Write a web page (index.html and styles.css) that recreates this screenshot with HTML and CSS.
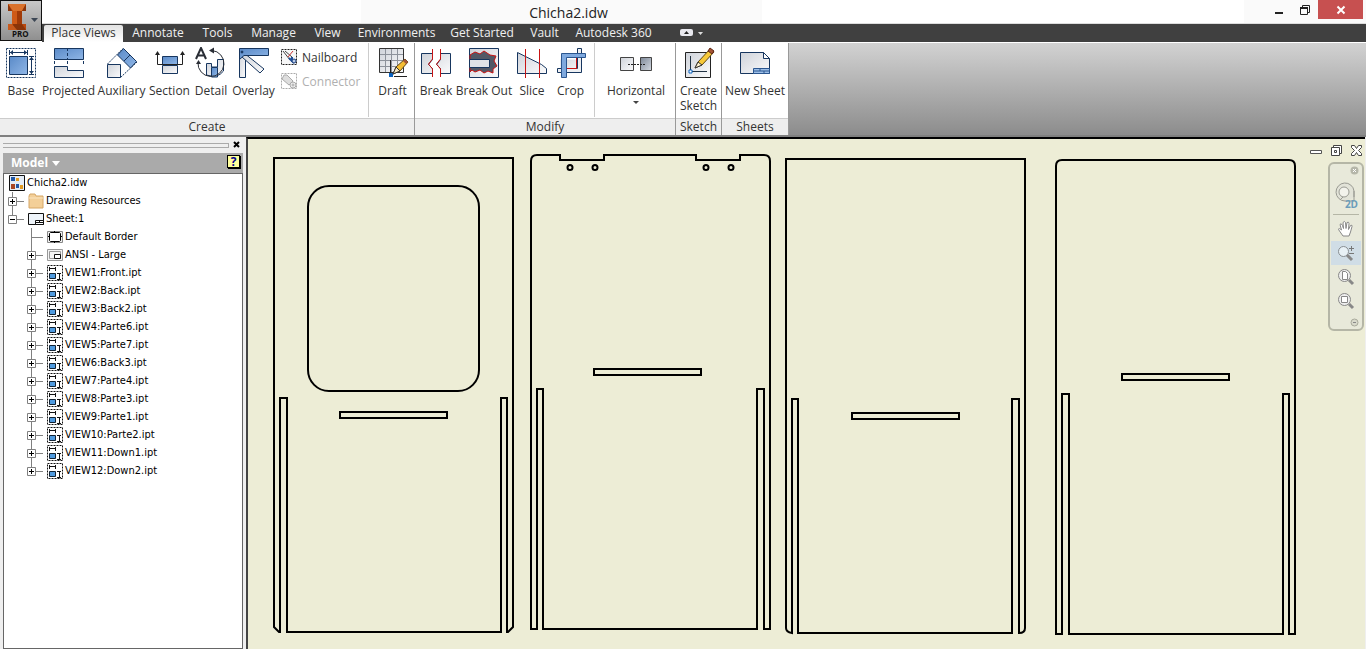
FILE: index.html
```
<!DOCTYPE html>

<html lang="en">
	<head>
		<title>Chicha2.idw</title>
		<meta charset="utf-8" />
		<link rel="stylesheet" href="styles.css">
	</head>
	<body>
		<!-- shared gradients and tree icons -->
		<svg class="defs" width="0" height="0" aria-hidden="true">
			<defs>
				<linearGradient id="blue" x1="0" y1="0" x2="1" y2="1"><stop offset="0" stop-color="#5a8ac8"/><stop offset="1" stop-color="#8fb6e6"/></linearGradient>
				<linearGradient id="silver" x1="0" y1="0" x2="1" y2="1"><stop offset="0" stop-color="#cfd3da"/><stop offset="1" stop-color="#fbfbfc"/></linearGradient>
				<linearGradient id="steel" x1="0" y1="0" x2="1" y2="1"><stop offset="0" stop-color="#7c8797"/><stop offset="1" stop-color="#d5dae2"/></linearGradient>
				<symbol id="twig-plus" viewBox="0 0 20 18"><path d="M4.500 0v18M9 9.500h7" stroke="#808080"/><path d="M.5 5.500h8v8h-8z" fill="#fff" stroke="#808080"/><path d="M2 9.500h5M4.500 7v5" stroke="#000"/></symbol>
				<symbol id="twig-last" viewBox="0 0 20 18"><path d="M4.500 0v9M9 9.500h7" stroke="#808080"/><path d="M.5 5.500h8v8h-8z" fill="#fff" stroke="#808080"/><path d="M2 9.500h5M4.500 7v5" stroke="#000"/></symbol>
				<symbol id="twig-minus" viewBox="0 0 20 18"><path d="M4.500 0v9M9 9.500h7" stroke="#808080"/><path d="M.5 5.500h8v8h-8z" fill="#fff" stroke="#808080"/><path d="M2 9.500h5" stroke="#000"/></symbol>
				<symbol id="twig-leaf" viewBox="0 0 20 18"><path d="M4.500 0v18M5 9.500h11" stroke="#808080"/></symbol>
				<symbol id="view" viewBox="0 0 16 16"><path d="M.5.5h15v15H.5z" fill="#fff" stroke="#111" stroke-dasharray="2 1"/><path d="M2.500 2v4M8.500 2v4M3 3.500h5M10 8.500h4M10 14.500h4M12.500 9v5" stroke="#111" fill="none"/><path d="M2.500 8.500h6v5h-6z" fill="#4f9be0" stroke="#123"/></symbol>
			</defs>
		</svg>

		<header class="top">
			<button class="app" aria-label="Application menu">
				<svg width="40" height="40" viewBox="0 0 40 40">
					<path d="M7 3h18v7h-4v13h4v6H7v-6h4V10H7z" fill="#b9480f"/>
					<path d="M7 3h18l-4 7h-9z" fill="#d9722c"/><path d="M7 3l4 7H7zM25 3v7h-4z" fill="#8a3409"/>
					<path d="M11 10h5v13h-5z" fill="#cf5a17"/><path d="M16 10h5v13h-5z" fill="#a03a08"/>
					<path d="M8 29l4-6h9l4 6z" fill="#8a3409"/><path d="M7 23h4l5 6H7z" fill="#c85a1c"/>
					<path d="M30 17h7l-3.500 4z" fill="#3c4654"/>
				</svg>
				<span>PRO</span>
			</button>
			<div class="titlebar">
				<h1>Chicha2.idw</h1>
				<div class="window-buttons">
					<button aria-label="Minimize"><svg width="12" height="12"><path d="M2 8h8v2H2z" fill="#222"/></svg></button>
					<button aria-label="Restore"><svg width="12" height="12"><path d="M1.500 3.500h7v7h-7zM3.500 3V1.500h7v7H9" fill="none" stroke="#222"/><path d="M1 3h8v2H1z" fill="#222"/></svg></button>
					<button class="close" aria-label="Close"><svg width="10" height="10"><path d="M1.500 1.500l7 7M8.500 1.500l-7 7" stroke="#fff" stroke-width="2"/></svg></button>
				</div>
			</div>
			<nav class="tabs">
				<a href="#" class="active">Place Views</a>
				<a href="#">Annotate</a>
				<a href="#">Tools</a>
				<a href="#">Manage</a>
				<a href="#">View</a>
				<a href="#">Environments</a>
				<a href="#">Get Started</a>
				<a href="#">Vault</a>
				<a href="#">Autodesk 360</a>
				<button aria-label="Minimize ribbon"><svg width="24" height="8"><rect width="13" height="7" rx="2" fill="#e8e8ee"/><path d="M4 5h5L6.500 2z" fill="#222"/><path d="M18 3h5l-2.500 3z" fill="#ddd"/></svg></button>
			</nav>
		</header>

		<div class="ribbon">
			<section class="panel create">
				<div class="tools">
					<button class="tool"><svg width="32" height="32" fill="none" stroke="#17365f"><path d="M1.500 1.500h29v29h-29z" stroke-dasharray="2 1"/><path d="M4.500 9.500h18v18h-18z" fill="url(#blue)" stroke-width="1"/><path d="M4.500 3v5M22.500 3v5M5 5.500h17M24 9.500h5M24 27.500h5M26.500 10v17" /><path d="M8 3v5L5 5.500zM19 3v5l3-2.500zM24 13h5l-2.500-3zM24 24h5l-2.500 3z" fill="#17365f" stroke="none"/></svg>Base</button>
					<button class="tool"><svg width="32" height="32" stroke="#17365f"><path d="M1.500 1.500h29v11h-29z" fill="url(#blue)"/><path d="M14.500 1v12M1.500 14v4M30.500 14v4M14.500 14v4" stroke-dasharray="3 2"/><path d="M1.500 19.500h13v4h16v7h-29z" fill="url(#silver)"/></svg>Projected</button>
					<button class="tool"><svg width="32" height="32" stroke="#17365f"><path d="M1.500 17L17 1.500M14.500 30.500L31 15" stroke-dasharray="2 1"/><path d="M1.500 17.500h13v13h-13z" fill="url(#silver)"/><path d="M17.500 1.500l13 13-6 6.500-13-13z" fill="url(#blue)"/><path d="M18 14l6-6"/></svg>Auxiliary</button>
					<button class="tool"><svg width="32" height="32" stroke="#17365f"><path d="M8.500 18.500h15v8h-15z" fill="url(#silver)"/><path d="M8.500 9.500h15v8h-15z" fill="url(#blue)"/><path d="M3.500 5v12.500h25V5" fill="none" stroke="#222"/><path d="M1 8l2.500-4L6 8zM26 8l2.500-4L31 8z" fill="#222" stroke="none"/></svg>Section</button>
					<button class="tool"><svg width="32" height="32" fill="none" stroke="#17365f"><path d="M11.500 28V16.500h5V20h6v-7.500h6V24q-6 8-17 4z" fill="url(#silver)"/><path d="M16.500 20.500h6V30h-6z" fill="url(#blue)"/><path d="M17 3.500a13 13 0 1 1-14 12" stroke="#2a2e36"/><path d="M14 3.500l5-3v6zM1 17l2.500-4L6 17z" fill="#2a2e36" stroke="none"/><path d="M1 12L6 1l5 11M3 8.500h6" stroke="#2a2e36" stroke-width="2"/></svg>Detail</button>
					<button class="tool"><svg width="32" height="32" stroke="#17365f"><path d="M1.500 4h6v26.500h-6z" fill="url(#silver)"/><path d="M6 6l20 16-4 4L4 10z" fill="url(#silver)"/><path d="M1.500 1.500h29v7H6l-4.500 4z" fill="url(#blue)"/><circle cx="4" cy="5" r="1" fill="#17365f"/></svg>Overlay</button>
					<div class="small-tools">
						<button class="small"><svg width="16" height="16"><path d="M.5.5h15v15H.5z" fill="#f7f7f7" stroke="#222" stroke-dasharray="2 1"/><path d="M2 2l7 9M4 2l7 6" stroke="#444"/><path d="M7 8l5-6" stroke="#c33"/><path d="M8 9l5 5M11 8v5" stroke="#1d4f9c" stroke-width="2"/><circle cx="13" cy="12" r="2" fill="#b9cbe8" stroke="#1d3f7c"/></svg>Nailboard</button>
						<button class="small" disabled><svg width="16" height="16" fill="none" stroke="#aaa"><path d="M.5.5h15v15H.5z" stroke-dasharray="2 1"/><path d="M3 2l-2 4 7 6 4-4-6-6z" fill="#ddd"/><circle cx="12" cy="12" r="3" fill="#eee"/><circle cx="12" cy="12" r="1"/></svg>Connector</button>
					</div>
					<button class="tool draft"><svg width="32" height="32"><path d="M2.500 1.500h24v24h-24z" fill="url(#silver)" stroke="#333"/><path d="M8.500 2v23M14.500 2v23M20.500 2v23M3 7.500h23M3 13.500h23M3 19.500h23" stroke="#8d929b"/><path d="M13.500 13v13" stroke="#222"/><path d="M12 26h4v4h-4z" fill="#0b62c0"/><path d="M17 29.500h13" stroke="#222"/><path d="M16 27l3-7 9-8 3 3-8 9z" fill="#f5bd33" stroke="#5f4716"/><path d="M16 27l3-7 4 4z" fill="#f7e7c0" stroke="#333"/><path d="M26 14l2-2 3 3-2 2z" fill="#a55436"/></svg>Draft</button>
				</div>
				<h2>Create</h2>
			</section>
			<section class="panel modify">
				<div class="tools">
					<button class="tool"><svg width="32" height="32" fill="none"><path d="M12.500 6.500h-11v20h11v-5l-4-4 4-5zM20.500 6.500h10v20h-10v-5l-4-4 4-5z" fill="url(#silver)" stroke="#17365f"/><path d="M12.500 2v10l-4 5 4 5v8M20.500 2v10l-4 5 4 5v8" fill="none" stroke="#c81414"/></svg>Break</button>
					<button class="tool"><svg width="32" height="32"><path d="M1.500 1.500h29v29h-29z" fill="url(#silver)" stroke="#17365f"/><path d="M2 8l5-3 5 2 4-3 6 4 6 1-2 5 3 5-4 3v4l-5-2-4 2-4-3-5 2-3-2-2 2z" fill="#525866" stroke="#c81414"/><path d="M1.500 12.500h20v8h-20z" fill="#dfe2e7" stroke="#17365f"/></svg>Break Out</button>
					<button class="tool"><svg width="32" height="32"><path d="M1.500 5.500l24 12 5 4v5h-29z" fill="url(#silver)" stroke="#17365f"/><path d="M9.500 2v29M23.500 2v29" stroke="#c81414"/></svg>Slice</button>
					<button class="tool crop"><svg width="32" height="32" fill="none" stroke="#17365f"><path d="M5.500 12.500h17v13h-17z" fill="url(#silver)" stroke="none"/><path d="M22.500 1.500h4v24h-24v-4h20z" fill="#eef0f3"/><path d="M21.500 11v10.500h-10" stroke="#c81414"/><path d="M6.500 6.500h24v4h-19v20h-5z" fill="#7fa9de" stroke="#2b568f"/></svg>Crop</button>
					<button class="tool horizontal"><svg width="32" height="32"><path d="M.5 10.500h13v13H.5z" fill="url(#silver)" stroke="#444"/><path d="M20.500 10.500h11v13h-11z" fill="url(#steel)" stroke="#444"/><path d="M8 17.500h18" stroke="#222" stroke-dasharray="2 1"/></svg>Horizontal<i class="caret"></i></button>
				</div>
				<h2>Modify</h2>
			</section>
			<section class="panel sketch">
				<div class="tools">
					<button class="tool"><svg width="32" height="32"><path d="M2.500 5.500h25v25h-25z" fill="url(#silver)" stroke="#222"/><path d="M7.500 9v14M9 24.500h15" stroke="#234"/><path d="M6 23h3v3H6z" fill="#fff" stroke="#0b62c0"/><path d="M12 21l3-6L27 2l4 3-12 13z" fill="#f7c93a" stroke="#5f4716"/><path d="M12 21l3-6 4 3z" fill="#fff2cf" stroke="#333"/><path d="M25 4l2-3 4 3-2 3z" fill="#a55436" stroke="#5f2716"/></svg>Create<br>Sketch</button>
				</div>
				<h2>Sketch</h2>
			</section>
			<section class="panel sheets">
				<div class="tools">
					<button class="tool"><svg width="32" height="32"><path d="M1.500 5.500h23l6 6v15h-29z" fill="url(#silver)" stroke="#17365f"/><path d="M24.500 5.500v6h6z" fill="#fff" stroke="#17365f"/><path d="M14.500 21.500h16v5h-16zM14 24h16M21 22v2M25 24v3" fill="#9dbfe8" stroke="#2b568f"/></svg>New Sheet</button>
				</div>
				<h2>Sheets</h2>
			</section>
		</div>

		<div class="workspace">
			<aside class="browser">
				<div class="grip"><span></span><button aria-label="Close browser"><svg width="8" height="8"><path d="M1 1l5 5M6 1L1 6" stroke="#000" stroke-width="2"/></svg></button></div>
				<div class="browser-head">
					<button>Model <svg width="8" height="5"><path d="M0 0h8L4 5z" fill="#fff"/></svg></button>
					<button class="help" aria-label="Help">?</button>
				</div>
				<ul class="tree">
					<li>
						<div class="row root"><svg width="16" height="16"><path d="M.5.5h15v15H.5z" fill="#e4edf7" stroke="#111"/><path d="M2 2h4v4H2zM7 9h3v4H7z" fill="#2358a5"/><path d="M7 3h3v3H7zM11 10h3v4h-3z" fill="#e19a22"/><path d="M2 9h4v5H2z" fill="#a84624"/></svg>Chicha2.idw</div>
						<ul>
							<li><div class="row"><svg class="twig"><use href="#twig-plus"/></svg><svg width="16" height="16"><path d="M1 3l1-2h5l1 2h7v12H1z" fill="#f3cf98" stroke="#d6a766"/><path d="M1 5h14" stroke="#fbe5c0"/></svg>Drawing Resources</div></li>
							<li>
								<div class="row"><svg class="twig"><use href="#twig-minus"/></svg><svg width="16" height="16"><path d="M.5 2.500h15v11H.5z" fill="#eef4fa" stroke="#111"/><path d="M7.500 9.500h8v4h-8zM8 11.500h7M11.500 10v2" fill="#fff" stroke="#111"/></svg>Sheet:1</div>
								<ul>
									<li><div class="row"><svg class="twig"><use href="#twig-leaf"/></svg><svg width="16" height="16"><path d="M.5 2.500h15v11H.5z" fill="#eee" stroke="#888"/><path d="M2.500 4.500l1-1h9l1 1v7l-1 1h-9l-1-1z" fill="#fff" stroke="#000"/><path d="M1 7.500h1M14 7.500h1M7.500 2v1M7.500 13v1" stroke="#000"/></svg>Default Border</div></li>
									<li><div class="row"><svg class="twig"><use href="#twig-plus"/></svg><svg width="16" height="16"><path d="M.5 2.500h15v11H.5zM2.500 4.500h11v7h-11z" fill="#f4f4f4" stroke="#999"/><path d="M7.500 7.500h6v4h-6z" fill="#fff" stroke="#111"/></svg>ANSI - Large</div></li>
									<li><div class="row"><svg class="twig"><use href="#twig-plus"/></svg><svg width="16" height="16"><use href="#view"/></svg>VIEW1:Front.ipt</div></li>
									<li><div class="row"><svg class="twig"><use href="#twig-plus"/></svg><svg width="16" height="16"><use href="#view"/></svg>VIEW2:Back.ipt</div></li>
									<li><div class="row"><svg class="twig"><use href="#twig-plus"/></svg><svg width="16" height="16"><use href="#view"/></svg>VIEW3:Back2.ipt</div></li>
									<li><div class="row"><svg class="twig"><use href="#twig-plus"/></svg><svg width="16" height="16"><use href="#view"/></svg>VIEW4:Parte6.ipt</div></li>
									<li><div class="row"><svg class="twig"><use href="#twig-plus"/></svg><svg width="16" height="16"><use href="#view"/></svg>VIEW5:Parte7.ipt</div></li>
									<li><div class="row"><svg class="twig"><use href="#twig-plus"/></svg><svg width="16" height="16"><use href="#view"/></svg>VIEW6:Back3.ipt</div></li>
									<li><div class="row"><svg class="twig"><use href="#twig-plus"/></svg><svg width="16" height="16"><use href="#view"/></svg>VIEW7:Parte4.ipt</div></li>
									<li><div class="row"><svg class="twig"><use href="#twig-plus"/></svg><svg width="16" height="16"><use href="#view"/></svg>VIEW8:Parte3.ipt</div></li>
									<li><div class="row"><svg class="twig"><use href="#twig-plus"/></svg><svg width="16" height="16"><use href="#view"/></svg>VIEW9:Parte1.ipt</div></li>
									<li><div class="row"><svg class="twig"><use href="#twig-plus"/></svg><svg width="16" height="16"><use href="#view"/></svg>VIEW10:Parte2.ipt</div></li>
									<li><div class="row"><svg class="twig"><use href="#twig-plus"/></svg><svg width="16" height="16"><use href="#view"/></svg>VIEW11:Down1.ipt</div></li>
									<li><div class="row"><svg class="twig"><use href="#twig-last"/></svg><svg width="16" height="16"><use href="#view"/></svg>VIEW12:Down2.ipt</div></li>
								</ul>
							</li>
						</ul>
					</li>
				</ul>
			</aside>

			<main class="canvas">
				<svg class="drawing" width="1100" height="508" viewBox="248 139 1100 508" fill="none" stroke="#000" stroke-width="2">
					<!-- front -->
					<path d="M280 632h-1l-5-5V158h239v469l-5 5h-1V398h-6v234H287V398h-7z"/>
					<rect x="308" y="186" width="171" height="205" rx="21"/>
					<path d="M340 412h107v6H340z"/>
					<!-- back -->
					<path d="M537 629h-6V161q0-6 6-6h23v5h44v-5h92v5h44v-5h24q6 0 6 6v468h-6V389h-7v240H543V389h-6z"/>
					<circle cx="570" cy="167.500" r="2.500"/><circle cx="595" cy="167.500" r="2.500"/>
					<circle cx="706" cy="167.500" r="2.500"/><circle cx="731" cy="167.500" r="2.500"/>
					<path d="M594 369h107v6H594z"/>
					<!-- back 2 -->
					<path d="M792 633q-6-1-6-5V159h239v469q0 5-6 5V399h-7v234H798V399h-6z"/>
					<path d="M852 413h107v6H852z"/>
					<!-- parte 6 -->
					<path d="M1062 634h-6V166q0-6 6-6h227q6 0 6 6v468h-6V394h-6v240H1069V394h-7z"/>
					<path d="M1122 374h107v6h-107z"/>
				</svg>
				<div class="doc-buttons">
					<button aria-label="Minimize document"><svg width="13" height="13"><path d="M.5 6.500h11v3H.5z" fill="#fff" stroke="#555"/></svg></button>
					<button aria-label="Restore document"><svg width="13" height="13" fill="#fff" stroke="#444"><path d="M3.500 1.500h8v8h-8z"/><path d="M1.500 3.500h8v8h-8zM4.500 6.500h2v2h-2z"/></svg></button>
					<button aria-label="Close document"><svg width="13" height="13"><path d="M1.500 1.500h3l2 3 2-3h3v2l-3 3 3 3v2h-3l-2-3-2 3h-3v-2l3-3-3-3z" fill="#fff" stroke="#444"/></svg></button>
				</div>
				<div class="navbar">
					<button class="tiny" aria-label="Close"><svg width="9" height="9"><circle cx="4.500" cy="4.500" r="4" fill="#b5b6a9"/><path d="M3 3l3 3M6 3L3 6" stroke="#fff"/></svg></button>
					<button class="wheel" aria-label="2D wheel"><svg width="24" height="24" fill="none" stroke="#999a92"><path d="M20 15V9a9 9 0 1 0-9 10h2" fill="#e2e3d8"/><path d="M20 9v10h-7" /><circle cx="10" cy="10" r="5" fill="#f3f3ec"/><path d="M6 18l3-3"/></svg><span>2D</span></button>
					<hr>
					<button aria-label="Pan"><svg width="18" height="18"><path d="M6 16L1.500 9.500q0-2 3 .5L3 4.500q1-2 2.500 1l1 3-.5-6q1.500-2 2.500 0l.5 6 1-6q2-1 2 1l-.5 6 2-4q2-1 1.500 1L13.500 12 12 16z" fill="#fff" stroke="#888"/></svg></button>
					<button class="on" aria-label="Zoom"><svg width="18" height="18"><circle cx="6.500" cy="7.500" r="5" fill="#e8f1f6" stroke="#888e92"/><path d="M10 11l5 5" stroke="#888" stroke-width="3"/><path d="M12 4.500h5M14.500 2v5M12 9.500h5" stroke="#777"/></svg></button>
					<button aria-label="Zoom all"><svg width="18" height="18"><circle cx="7.500" cy="7.500" r="6" fill="#eee" stroke="#888"/><path d="M5.500 3.500h3l2 2v6h-5z" fill="#fff" stroke="#888"/><path d="M12 12l4 4" stroke="#888" stroke-width="3"/></svg></button>
					<button aria-label="Zoom window"><svg width="18" height="18"><circle cx="7.500" cy="7.500" r="6" fill="#eee" stroke="#888"/><path d="M4.500 4.500h6v6h-6z" fill="#fff" stroke="#888"/><path d="M12 12l4 4" stroke="#888" stroke-width="3"/></svg></button>
					<button class="tiny" aria-label="Customize"><svg width="9" height="9"><circle cx="4.500" cy="4.500" r="3.500" fill="#d8d9cb" stroke="#a9aa9c"/><path d="M3 4.500h3" stroke="#888"/></svg></button>
				</div>
			</main>
		</div>
	</body>
</html>
```
FILE: styles.css
```
*{ box-sizing: border-box; }
body{
	margin: 0; min-height: 100vh; display: flex; flex-direction: column;
	background: #efefef; color: #333; font: 12px/15px "Open Sans", sans-serif;
	overflow-x: hidden;
}
button{ border: none; background: none; padding: 0; margin: 0; color: inherit; font: inherit; cursor: pointer; }
svg{ display: block; flex: none; }
.defs{ position: absolute; }
h1, h2{ margin: 0; font-weight: normal; }

/* title bar and tabs */
.top{ display: grid; grid-template-columns: 42px 1fr; grid-template-rows: 24px 18px; background: white; }
.app{
	grid-row: 1 / 3; position: relative; height: 41px; overflow: hidden;
	border: 1px solid #111; background: linear-gradient(#c9c9c9, #8f8f8f);
}
.app span{ position: absolute; left: 11px; bottom: 1px; font: bold 8px/10px "Open Sans", sans-serif; color: #111; }
.titlebar{ display: flex; justify-content: space-between; border-bottom: 1px solid #ddd; }
.titlebar h1{
	width: 401px; margin-left: 319px; padding-left: 14px; background: #fafafa;
	font-size: 14px; line-height: 25px; text-align: center; color: #222;
}
.window-buttons{ display: flex; width: 122px; padding-right: 3px; justify-content: flex-end; background: #fafafa; }
.window-buttons button{ width: 26px; height: 19px; display: flex; align-items: center; justify-content: center; }
.window-buttons .close{ width: 45px; background: #c75050; }
.tabs{
	display: grid; grid-template-columns: 79px 70px 49px 63px 45px 93px 78px 47px 91px 66px;
	padding-left: 2px; background: #404040;
}
.tabs a{ color: #f0f0f0; text-decoration: none; text-align: center; line-height: 18px; white-space: nowrap; }
.tabs .active{ margin-top: 1px; line-height: 16px; background: linear-gradient(#e2e2e2, #fff); color: #333; border-radius: 2px 2px 0 0; }
.tabs button{ display: flex; align-items: center; justify-content: center; }

/* ribbon */
.ribbon{
	display: flex; height: 95px; border-top: 1px solid white; border-bottom: 2px solid #808080;
	background: linear-gradient(#d2d2d2, #8c8c8c);
}
.panel{ display: flex; flex-direction: column; background: white; border-right: 1px solid #999; }
.panel h2{
	height: 17px; border-top: 1px solid #ccc; background: #eee;
	font-size: 12px; line-height: 16px; text-align: center;
}
.tools{ flex: 1; display: grid; }
.create{ width: 415px; }
.create .tools{ grid-template-columns: 42px 53px 53px 43px 40px 45px 92px 46px; }
.modify{ width: 261px; }
.modify .tools{ grid-template-columns: 42px 54px 42px 41px 81px; }
.sketch{ width: 46px; }
.sheets{ width: 67px; }
.tool{ display: flex; flex-direction: column; align-items: center; padding-top: 4px; white-space: nowrap; }
.tool svg{ margin-bottom: 4px; }
.crop{ padding-right: 6px; }
.draft, .horizontal{ padding-left: 2px; border-left: 1px solid #ccc; height: 74px; }
.caret{ margin-top: 3px; border: 3px solid transparent; border-top-color: #444; }
.small-tools{ padding: 2px 0 0 5px; }
.small{ display: flex; align-items: center; gap: 5px; height: 24px; }
.small:disabled{ color: #b0b0b0; }

/* model browser */
.workspace{ flex: 1; display: flex; }
.browser{
	width: 246px; padding: 0 3px; display: flex; flex-direction: column;
	color: black; font: 11px/18px "DejaVu Sans Condensed", "Open Sans", sans-serif;
}
.grip{ height: 16px; display: flex; align-items: center; gap: 4px; }
.grip span{ width: 226px; height: 5px; border: 1px solid #aaa; border-left: none; }
.browser-head{ display: flex; justify-content: space-between; height: 20px; padding: 0 3px 0 8px; background: #aaa; }
.browser-head button{ display: flex; align-items: center; gap: 4px; color: white; font: bold 12px/20px "Open Sans", sans-serif; }
.browser-head .help{
	width: 13px; height: 13px; margin-top: 2px; justify-content: center;
	border: 1px solid black; background: #ffff9c; color: #00008b; line-height: 11px;
	box-shadow: 1px 1px black;
}
.tree{ flex: 1; border: 1px solid #666; background: white; }
ul{ list-style: none; margin: 0; padding: 0; }
li ul li ul{ padding-left: 19px; }
.row{ display: flex; align-items: center; height: 18px; padding-left: 4px; white-space: pre; }
.row svg{ margin-right: 2px; }
.row .twig{ width: 20px; height: 18px; margin: 0; }
.root{ padding-left: 5px; }

/* drawing sheet */
.canvas{
	position: relative; flex: 1; min-width: 0; margin-right: 1px; overflow: hidden;
	border-left: 2px solid #444; border-top: 2px solid black; background: #ededd6;
}
.doc-buttons{ position: absolute; top: 5px; right: 2px; display: flex; gap: 7px; }
.navbar{
	position: absolute; top: 23px; right: 1px; width: 36px; padding: 2px 1px;
	display: flex; flex-direction: column; align-items: stretch;
	border: 2px solid #b5b6a6; border-radius: 6px; background: #e8e9da;
}
.navbar button{ height: 24px; display: flex; align-items: center; justify-content: center; }
.navbar .tiny{ height: 9px; justify-content: flex-end; padding-right: 2px; }
.navbar .wheel{ position: relative; height: 36px; margin-top: 1px; }
.navbar .wheel span{ position: absolute; right: 3px; bottom: 3px; font: bold 10px/10px "Open Sans", sans-serif; color: #6b9dba; }
.navbar hr{ width: 26px; margin: 2px auto; border: none; border-top: 1px solid #b5b6a6; }
.navbar .on{ background: #d0dde6; }
.navbar .tiny:last-child{ margin-top: 5px; }
```
